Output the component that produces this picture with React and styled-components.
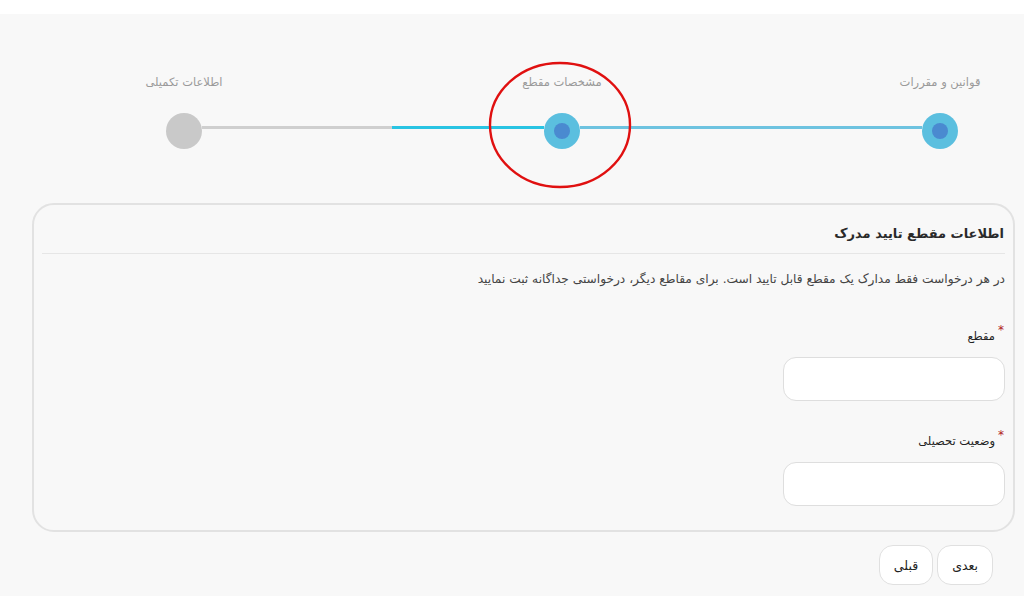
import styled, { createGlobalStyle } from 'styled-components';

const GlobalStyle = createGlobalStyle`
  html, body {
    margin: 0;
    padding: 0;
    background: #f8f8f8;
  }
  body {
    font-family: "DejaVu Sans", "Noto Sans", sans-serif;
  }
`;

const steps = [
  { title: 'قوانین و مقررات', done: true },
  { title: 'مشخصات مقطع', done: true, current: true },
  { title: 'اطلاعات تکمیلی', done: false },
];

function App() {
  return (
    <Page dir="rtl">
      <GlobalStyle />
      <TopBar />

      <Stepper>
        <Step>
          <StepLabel>{steps[0].title}</StepLabel>
          <StepDot $active />
        </Step>
        <Connector $fill={100} $color="#6ec3e0" />
        <Step>
          <StepLabel>{steps[1].title}</StepLabel>
          <StepDot $active />
          <Highlight width="146" height="128" viewBox="0 0 146 128">
            <ellipse cx="73" cy="64" rx="70" ry="62" fill="none" stroke="#e01010" strokeWidth="2.4" />
          </Highlight>
        </Step>
        <Connector $fill={44.5} $color="#29c4e3" />
        <Step>
          <StepLabel>{steps[2].title}</StepLabel>
          <StepDot />
        </Step>
      </Stepper>

      <Card>
        <CardTitle>اطلاعات مقطع تایید مدرک</CardTitle>
        <Divider />
        <Hint>در هر درخواست فقط مدارک یک مقطع قابل تایید است. برای مقاطع دیگر، درخواستی جداگانه ثبت نمایید</Hint>

        <Field $top={39}>
          <Label>مقطع</Label>
          <Input />
        </Field>
        <Field $top={31}>
          <Label>وضعیت تحصیلی</Label>
          <Input />
        </Field>
      </Card>

      <Actions>
        <NavButton>بعدی</NavButton>
        <NavButton>قبلی</NavButton>
      </Actions>
    </Page>
  );
}

const Page = styled.div`
  width: 1024px;
  height: 596px;
  overflow: hidden;
  background: #f8f8f8;
`;

const TopBar = styled.div`
  height: 14px;
  background: #ffffff;
`;

const Stepper = styled.div`
  display: flex;
  align-items: flex-end;
  padding: 0 66px 0 166px;
  margin-top: 60px;
`;

const Step = styled.div`
  position: relative;
  display: flex;
  flex-direction: column;
  align-items: center;
  width: 36px;
  flex-shrink: 0;
`;

const StepLabel = styled.div`
  white-space: nowrap;
  font-size: 11.5px;
  color: #9a9a9a;
  line-height: 16px;
  margin-bottom: 23px;
`;

const StepDot = styled.div`
  width: 36px;
  height: 36px;
  border-radius: 50%;
  background: ${(p) => (p.$active ? '#5bbfdf' : '#c9c9c9')};
  display: flex;
  align-items: center;
  justify-content: center;

  &::after {
    content: '';
    display: ${(p) => (p.$active ? 'block' : 'none')};
    width: 16px;
    height: 16px;
    border-radius: 50%;
    background: #4a8ad0;
  }
`;

const Connector = styled.div`
  flex: 1;
  height: 3px;
  margin-bottom: 20px;
  background: linear-gradient(
    to left,
    ${(p) => p.$color} ${(p) => p.$fill}%,
    #cfcfcf ${(p) => p.$fill}%
  );
`;

const Highlight = styled.svg`
  position: absolute;
  left: -57px;
  top: -13px;
  pointer-events: none;
`;

const Card = styled.div`
  margin: 54px 9px 0 32px;
  height: 329px;
  box-sizing: border-box;
  border: 2px solid #e2e2e2;
  border-radius: 22px;
  padding: 16px 8px 0 8px;
  display: flex;
  flex-direction: column;
`;

const CardTitle = styled.div`
  font-size: 13px;
  font-weight: bold;
  color: #2a2a2a;
  line-height: 26px;
  margin-right: 1px;
`;

const Divider = styled.div`
  height: 1px;
  background: #e6e6e6;
  margin: 6px 0 0 0;
`;

const Hint = styled.div`
  font-size: 12.2px;
  color: #444;
  line-height: 18px;
  margin-top: 16px;
`;

const Field = styled.div`
  display: flex;
  flex-direction: column;
  align-items: flex-start;
  margin-top: ${(p) => p.$top}px;
`;

const Label = styled.label`
  position: relative;
  font-size: 11.5px;
  color: #222;
  line-height: 18px;
  margin-right: 10px;
  margin-bottom: 12px;

  &::before {
    content: '*';
    position: absolute;
    right: -9px;
    top: -6px;
    color: #b02020;
    font-size: 12px;
  }
`;

const Input = styled.input`
  width: 222px;
  height: 44px;
  box-sizing: border-box;
  border: 1.5px solid #dedede;
  border-radius: 13px;
  background: #ffffff;
  outline: none;
`;

const Actions = styled.div`
  display: flex;
  gap: 4px;
  padding-right: 31px;
  margin-top: 13px;
`;

const NavButton = styled.button`
  height: 40px;
  min-width: 54px;
  padding: 0 14px;
  border: 1.5px solid #e0e0e0;
  border-radius: 14px;
  background: #ffffff;
  font-family: "DejaVu Sans", sans-serif;
  font-size: 12.5px;
  color: #222;
`;

export default App;
